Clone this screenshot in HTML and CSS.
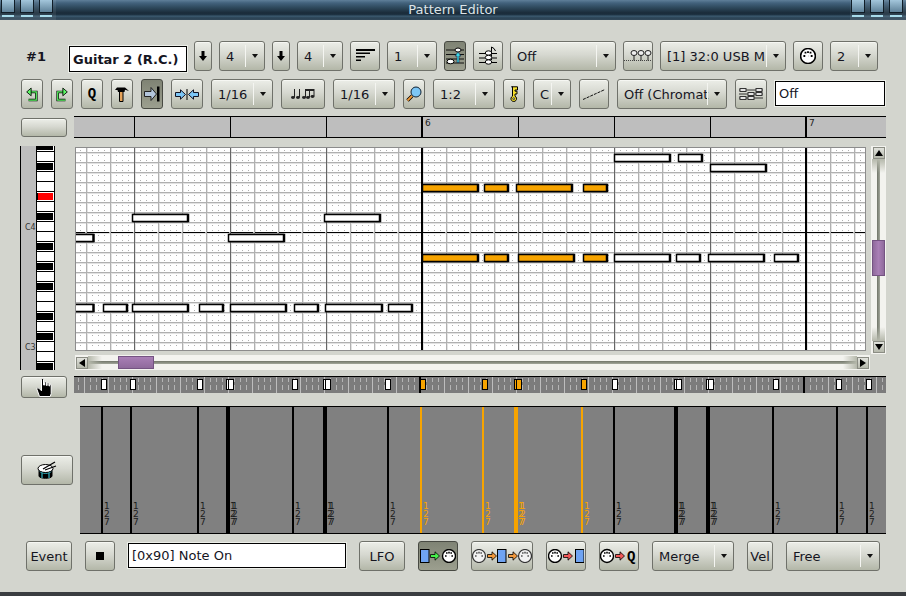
FILE: index.html
```html
<!DOCTYPE html>
<html lang="en">
<head>
  <meta charset="UTF-8">
  <title>Pattern Editor</title>
  <link rel="stylesheet" href="styles.css">
</head>
<body>
  <!-- shared icon parts -->
  <svg class="defs" aria-hidden="true">
    <defs>
      <g id="din">
        <circle cx="7" cy="7" r="6.5" fill="#fff" stroke="#000" stroke-width="1.4"/>
        <path d="M3 7h1.6M4 4h1.6M7 2.8v1.6M10 4H8.4M11 7H9.4M7 7h.1" stroke="#000" stroke-width="1.6" fill="none"/>
      </g>
      <g id="din-dim">
        <circle cx="7" cy="7" r="6.5" fill="#f2f2f2" stroke="#333" stroke-width="1.2"/>
        <path d="M3 7h1.6M4 4h1.6M7 2.8v1.6M10 4H8.4M11 7H9.4" stroke="#555" stroke-width="1.6" fill="none"/>
      </g>
      <rect id="blk" x=".5" y=".5" width="8.5" height="13" fill="#6fa3f2" stroke="#000"/>
      <path id="arr" d="M.5 3.500h4.500V.8L9.500 5 5 9.200V6.500H.5z" stroke="#000" stroke-width=".8"/>
    </defs>
  </svg>

  <header class="titlebar">
    <div class="wm"><i></i><i></i><i></i></div>
    <div class="title">Pattern Editor</div>
    <div class="wm"><i></i><i></i><i></i></div>
  </header>

  <div class="row row1">
    <div class="seq">#1</div>
    <div class="field name">Guitar 2 (R.C.)</div>
    <button class="btn w18"><svg width="10" height="12" viewBox="0 0 10 12"><path d="M3.500 1h3v5H9L5 11 1 6h2.500z"/></svg></button>
    <div class="combo w46"><span>4</span></div>
    <button class="btn w18"><svg width="10" height="12" viewBox="0 0 10 12"><path d="M3.500 1h3v5H9L5 11 1 6h2.500z"/></svg></button>
    <div class="combo w46"><span>4</span></div>
    <button class="btn w30"><svg width="20" height="14" viewBox="0 0 20 14"><path d="M1 0h19v2H1zM1 3.500h14v1.500H1zM1 7h9v1.500H1zM1 10.500h5V12H1z"/></svg></button>
    <div class="combo w50"><span>1</span></div>
    <button class="btn w22 on"><svg width="18" height="18" viewBox="0 0 18 18"><path d="M0 3h18M0 7.500h18M0 12h18M0 16h18" stroke="#111" fill="none"/><ellipse cx="12" cy="3" rx="3" ry="2" fill="#fff" stroke="#000"/><ellipse cx="4.500" cy="14.500" rx="3.500" ry="2.300" fill="#fff" stroke="#000"/><path d="M11 15.500V9H9l3-4 3 4h-2v6.500z" fill="#3fd8e8" stroke="#124" stroke-width=".6"/></svg></button>
    <button class="btn w30"><svg width="18" height="20" viewBox="0 0 18 20"><path d="M0 7.500h18M0 12h18M0 16.500h18" stroke="#000" fill="none"/><path d="M12.500 1v13M12.500 1q3 1 4 4" stroke="#000" fill="none"/><ellipse cx="9.500" cy="7" rx="3.200" ry="2.200" fill="#fff" stroke="#000"/><ellipse cx="9.500" cy="11.500" rx="3.200" ry="2.200" fill="#fff" stroke="#000"/><ellipse cx="9.500" cy="16" rx="3.200" ry="2.200" fill="#fff" stroke="#000"/></svg></button>
    <div class="combo w106"><span>Off</span></div>
    <button class="btn w30"><svg width="28" height="14" viewBox="0 0 28 14"><path d="M0 11.500h28" stroke="#444" stroke-dasharray="1 1" fill="none"/><g fill="#eee" stroke="#222"><ellipse cx="10" cy="4" rx="3" ry="2.500"/><ellipse cx="17" cy="4" rx="3" ry="2.500"/><ellipse cx="24" cy="4" rx="3" ry="2.500"/></g><path d="M10 6.500v5M17 6.500v5M24 6.500v5" stroke="#222" fill="none"/></svg></button>
    <div class="combo w126"><span>[1] 32:0 USB M</span></div>
    <button class="btn w30"><svg width="16" height="16" viewBox="0 0 14 14"><use href="#din"/></svg></button>
    <div class="combo w48"><span>2</span></div>
  </div>

  <div class="row row2">
    <button class="btn w22"><svg width="12" height="15" viewBox="0 0 14 17"><path d="M4 5.500H12V15H3" fill="none" stroke="#000" stroke-width="3"/><path d="M4 5.500H12V15H3" fill="none" stroke="#5dfa66" stroke-width="1.400"/><path d="M.8 5.500 6 1v9z" fill="#5dfa66" stroke="#000"/></svg></button>
    <button class="btn w22"><svg width="12" height="15" viewBox="0 0 14 17"><path d="M10 5.500H2V15H11" fill="none" stroke="#000" stroke-width="3"/><path d="M10 5.500H2V15H11" fill="none" stroke="#5dfa66" stroke-width="1.400"/><path d="M13.200 5.500 8 1v9z" fill="#5dfa66" stroke="#000"/></svg></button>
    <button class="btn w22 q">Q</button>
    <button class="btn w22"><svg width="14" height="15" viewBox="0 0 14 15"><path d="M4.500 4.500h3.500V14.500H4.500z" fill="#e6a35a" stroke="#000"/><path d="M0 3 2 .5h8L14 4 10 2.800 9.500 5H3L2.500 3z"/></svg></button>
    <button class="btn w22 on"><svg width="16" height="16" viewBox="0 0 16 16"><path d="M.5 5.500h6.500V1.500L12.500 8 7 14.500v-4H.5z" fill="#b4c6dc" stroke="#222"/><path d="M13 .5h2.500v15H13z"/></svg></button>
    <button class="btn w32"><svg width="24" height="11" viewBox="0 0 24 11"><path d="M.5 3.500h5V.8L10.500 5.500l-5 4.700V7.500h-5z" fill="#7cc6f6" stroke="#112"/><path d="M12 0v11" stroke="#000" fill="none"/><path d="M23.500 3.500h-5V.8L13.500 5.500l5 4.700V7.500h5z" fill="#7cc6f6" stroke="#112"/></svg></button>
    <div class="combo w62"><span>1/16</span></div>
    <button class="btn w44"><svg width="24" height="10" viewBox="0 0 24 10"><g fill="none" stroke="#222"><path d="M3.500 0v8M8.500 0v8M14.500 0v8M18.500 0v8M23 0v7"/><path d="M14.500 1h4M19 1h4" stroke-width="2"/></g><g fill="#222"><ellipse cx="2" cy="8.500" rx="2" ry="1.400"/><ellipse cx="7" cy="8.500" rx="2" ry="1.400"/><ellipse cx="13" cy="8.500" rx="2" ry="1.400"/><ellipse cx="17" cy="8.500" rx="2" ry="1.400"/><ellipse cx="21.500" cy="7.500" rx="2" ry="1.400"/></g></svg></button>
    <div class="combo w62"><span>1/16</span></div>
    <button class="btn w22"><svg width="16" height="16" viewBox="0 0 16 16"><path d="M6 10 1.500 14.500" stroke="#000" stroke-width="3.400" fill="none"/><path d="M6 10 1.500 14.500" stroke="#f29a38" stroke-width="1.800" fill="none"/><circle cx="10" cy="6" r="5" fill="#7cc6f6" stroke="#123"/></svg></button>
    <div class="combo w62"><span>1:2</span></div>
    <button class="btn w22"><svg width="9" height="16" viewBox="0 0 9 16"><path d="M1.500.8h6V4H5v1.200h2V8H5v2.200a2.800 2.800 0 1 1-2.500 0V.8z" fill="#f5e02c" stroke="#000"/><circle cx="3.700" cy="12.700" r="1" fill="#b9bcae" stroke="#000" stroke-width=".6"/></svg></button>
    <div class="combo w38"><span>C</span></div>
    <button class="btn w30"><svg width="22" height="11" viewBox="0 0 22 11"><path d="M0 10.500 22 .5" fill="none" stroke="#111" stroke-dasharray="3 1"/></svg></button>
    <div class="combo w110"><span>Off (Chromat</span></div>
    <button class="btn w32"><svg width="24" height="12" viewBox="0 0 24 12"><path d="M0 2h24M0 6h24M0 10h24" stroke="#333" fill="none"/><g fill="#e4e4e4" stroke="#333"><rect x="1" y=".5" width="6" height="3"/><rect x="9" y="4.500" width="6" height="3"/><rect x="17" y=".5" width="6" height="3"/><rect x="1" y="8.500" width="6" height="3"/><rect x="9" y="8.500" width="6" height="3"/><rect x="17" y="4.500" width="6" height="3"/></g></svg></button>
    <div class="field scale">Off</div>
  </div>

  <div class="row row3">
    <button class="btn grid-btn"></button>
    <svg class="ruler" width="812" height="22" viewBox="0 0 812 22" shape-rendering="crispEdges">
      <rect width="812" height="22" fill="#bebebe"/>
      <path d="M0 .5h812M0 21.500h812M60.500 0v22M156.500 0v22M252.500 0v22M444.500 0v22M540.500 0v22M636.500 0v22" stroke="#000" fill="none"/>
      <rect x="347" width="2" height="22"/>
      <rect x="731" width="2" height="22"/>
      <text class="bar-no" x="351" y="10">6</text>
      <text class="bar-no" x="735" y="10">7</text>
    </svg>
  </div>

  <div class="row editor">
    <svg class="piano" width="35" height="224" viewBox="0 0 35 224">
      <defs>
        <pattern id="keys" x="17" y="-5" width="18" height="120" patternUnits="userSpaceOnUse">
          <rect width="18" height="120" fill="#000"/>
          <g fill="#fff">
            <rect y="1" width="17" height="9"/><rect y="11" width="17" height="9"/><rect y="21" width="17" height="9"/><rect y="31" width="17" height="9"/><rect y="41" width="17" height="9"/><rect y="51" width="17" height="9"/><rect y="61" width="17" height="9"/><rect y="71" width="17" height="9"/><rect y="81" width="17" height="9"/><rect y="91" width="17" height="9"/><rect y="101" width="17" height="9"/><rect y="111" width="17" height="9"/>
          </g>
          <g fill="#000">
            <rect y="2" width="16" height="7"/><rect y="22" width="16" height="7"/><rect y="52" width="16" height="7"/><rect y="72" width="16" height="7"/><rect y="102" width="16" height="7"/>
          </g>
        </pattern>
      </defs>
      <rect width="1" height="224"/>
      <rect x="1" width="15" height="224" fill="#bebebe"/>
      <rect x="16" width="1" height="224"/>
      <rect x="17" width="18" height="224" fill="url(#keys)"/>
      <rect x="34" width="1" height="224"/>
      <rect x="18" y="47" width="15" height="7" fill="#f00"/>
      <text class="oct" x="5" y="84">C4</text>
      <text class="oct" x="5" y="204">C3</text>
    </svg>

    <div class="roll-wrap">
      <div class="roll-top">
        <svg class="roll" width="791" height="204" viewBox="0 0 791 204">
          <defs>
            <pattern id="cells" x="11" y="5" width="24" height="10" patternUnits="userSpaceOnUse">
              <rect width="24" height="10" fill="#fff"/>
              <path d="M1.500 0v10M0 1.500h24" stroke="#e2e2e2" shape-rendering="crispEdges"/>
              <path d="M.5 0v10M0 .5h24" stroke="#b0b0b0" shape-rendering="crispEdges"/>
              <path d="M6 3h1v1H6zM12 3h1v1h-1zM18 3h1v1h-1zM6 8h1v1H6zM12 8h1v1h-1zM18 8h1v1h-1z" fill="#b0b0b0"/>
            </pattern>
          </defs>
          <rect width="791" height="204" fill="url(#cells)"/>
          <path d="M59.500 0v204M155.500 0v204M251.500 0v204M443.500 0v204M539.500 0v204M635.500 0v204" stroke="#666" fill="none" shape-rendering="crispEdges"/>
          <rect x="346" width="2" height="204"/>
          <rect x="730" width="2" height="204"/>
          <path d="M0 85.500h791" stroke="#000" stroke-dasharray="22 2" stroke-dashoffset="12" fill="none" shape-rendering="crispEdges"/>
          <g class="notes">
            <rect x="539.500" y="7.500" width="55" height="7"/><rect x="603.500" y="7.500" width="23" height="7"/>
            <rect x="635.500" y="17.500" width="55" height="7"/>
            <rect class="sel" x="347.500" y="37.500" width="55" height="7"/><rect class="sel" x="409.500" y="37.500" width="23" height="7"/><rect class="sel" x="441.500" y="37.500" width="55" height="7"/><rect class="sel" x="508.500" y="37.500" width="23" height="7"/>
            <rect x="57.500" y="67.500" width="55" height="7"/><rect x="249.500" y="67.500" width="55" height="7"/>
            <rect x="-20" y="87.500" width="38" height="7"/><rect x="153.500" y="87.500" width="55" height="7"/>
            <rect class="sel" x="347.500" y="107.500" width="55" height="7"/><rect class="sel" x="409.500" y="107.500" width="23" height="7"/><rect class="sel" x="443.500" y="107.500" width="55" height="7"/><rect class="sel" x="508.500" y="107.500" width="23" height="7"/>
            <rect x="539.500" y="107.500" width="55" height="7"/><rect x="601.500" y="107.500" width="23" height="7"/><rect x="633.500" y="107.500" width="55" height="7"/><rect x="699.500" y="107.500" width="23" height="7"/>
            <rect x="-20" y="157.500" width="38" height="7"/><rect x="28.500" y="157.500" width="23" height="7"/><rect x="57.500" y="157.500" width="55" height="7"/><rect x="124.500" y="157.500" width="23" height="7"/><rect x="155.500" y="157.500" width="55" height="7"/><rect x="219.500" y="157.500" width="23" height="7"/><rect x="250.500" y="157.500" width="56" height="7"/><rect x="313.500" y="157.500" width="23" height="7"/>
          </g>
          <rect x=".5" y=".5" width="790" height="203" fill="none" stroke="#8c8c8c"/>
        </svg>
        <div class="vscroll">
          <div class="sb-btn"><svg width="8" height="6" viewBox="0 0 8 6"><path d="M4 0l4 6H0z"/></svg></div>
          <div class="vtrack"><div class="vthumb"></div></div>
          <div class="sb-btn"><svg width="8" height="6" viewBox="0 0 8 6"><path d="M4 6l4-6H0z"/></svg></div>
        </div>
      </div>
      <div class="hscroll">
        <div class="sb-btn"><svg width="6" height="8" viewBox="0 0 6 8"><path d="M0 4l6 4V0z"/></svg></div>
        <div class="htrack"><div class="hthumb"></div></div>
        <div class="sb-btn"><svg width="6" height="8" viewBox="0 0 6 8"><path d="M6 4L0 8V0z"/></svg></div>
      </div>
    </div>
  </div>

  <div class="row strip-row">
    <button class="btn hand-btn"><svg width="17" height="19" viewBox="0 0 17 19"><path d="M5.500 1.500c0-1.300 2-1.300 2 0V7l1 .1V4.500c0-1 1.700-1 1.700 0V7.300l1 .2V5.500c0-1 1.700-1 1.700 0v2.300l.8.200V7c0-1 1.500-1 1.500 0v8.500l-1 3H3.500L1 11.500c-.6-1.400 1-2.200 2-1.200l2.500 2.500z" stroke="#fff"/></svg></button>
    <svg class="strip" width="812" height="17" viewBox="0 0 812 17" shape-rendering="crispEdges">
      <defs>
        <pattern id="ticks" x="10" width="24" height="17" patternUnits="userSpaceOnUse">
          <rect width="24" height="17" fill="#7c7c7c"/>
          <path d="M.5 0v17" stroke="#bdbdbd"/>
          <path d="M6.500 2v4M12.500 2v4M18.500 2v4M6.500 9v5M12.500 9v5M18.500 9v5" stroke="#b4b4b4"/>
        </pattern>
      </defs>
      <rect width="812" height="17" fill="url(#ticks)"/>
      <rect width="812" height="1"/>
      <rect x="345" width="2" height="17"/>
      <rect x="729" width="2" height="17"/>
      <g class="marks">
        <rect x="27.500" y="3.500" width="5" height="10"/><rect x="56.500" y="3.500" width="5" height="10"/><rect x="123.500" y="3.500" width="5" height="10"/><rect x="152.500" y="3.500" width="5" height="10"/><rect x="154.500" y="3.500" width="5" height="10"/><rect x="218.500" y="3.500" width="5" height="10"/><rect x="249.500" y="3.500" width="5" height="10"/><rect x="251.500" y="3.500" width="5" height="10"/><rect x="311.500" y="3.500" width="5" height="10"/>
        <rect class="sel" x="346.500" y="3.500" width="5" height="10"/><rect class="sel" x="408.500" y="3.500" width="5" height="10"/><rect class="sel" x="440.500" y="3.500" width="5" height="10"/><rect class="sel" x="442.500" y="3.500" width="5" height="10"/><rect class="sel" x="507.500" y="3.500" width="5" height="10"/>
        <rect x="538.500" y="3.500" width="5" height="10"/><rect x="600.500" y="3.500" width="5" height="10"/><rect x="602.500" y="3.500" width="5" height="10"/><rect x="632.500" y="3.500" width="5" height="10"/><rect x="634.500" y="3.500" width="5" height="10"/><rect x="699.500" y="3.500" width="5" height="10"/><rect x="762.500" y="3.500" width="5" height="10"/><rect x="792.500" y="3.500" width="5" height="10"/>
      </g>
    </svg>
  </div>

  <div class="row vel-row">
    <button class="btn drum-btn"><svg width="20" height="20" viewBox="0 0 20 20"><path d="M2 9v7c0 3 13 3 13 0V9z" stroke="#000"/><path d="M5 12v6M12 12v6M2.500 11c2 3 10 3 12 0" stroke="#3fd8e8" fill="none"/><ellipse cx="8.500" cy="8.500" rx="7.500" ry="4" fill="#fff" stroke="#000"/><path d="M6 9l12-7M8 10l11-4" stroke="#000" stroke-width="1.300" fill="none"/></svg></button>
    <div class="vel">
      <div class="ev" style="left:21px"><span>127</span></div>
      <div class="ev" style="left:50px"><span>127</span></div>
      <div class="ev" style="left:117px"><span>127</span></div>
      <div class="ev wide" style="left:146px"><span>127</span></div>
      <div class="ev" style="left:212px"><span>127</span></div>
      <div class="ev wide" style="left:243px"><span>127</span></div>
      <div class="ev" style="left:307px"><span>127</span></div>
      <div class="ev sel" style="left:340px"><span>127</span></div>
      <div class="ev sel" style="left:402px"><span>127</span></div>
      <div class="ev sel wide" style="left:434px"><span>127</span></div>
      <div class="ev sel" style="left:501px"><span>127</span></div>
      <div class="ev" style="left:533px"><span>127</span></div>
      <div class="ev wide" style="left:594px"><span>127</span></div>
      <div class="ev wide" style="left:626px"><span>127</span></div>
      <div class="ev" style="left:692px"><span>127</span></div>
      <div class="ev" style="left:756px"><span>127</span></div>
      <div class="ev" style="left:786px"><span>127</span></div>
    </div>
  </div>

  <div class="row bottom">
    <button class="btn w46 txt">Event</button>
    <button class="btn w30"><svg width="8" height="8" viewBox="0 0 8 8"><path d="M0 0h8v8H0z"/></svg></button>
    <div class="field status">[0x90] Note On</div>
    <button class="btn w46 txt">LFO</button>
    <button class="btn w40 on"><svg width="36" height="14" viewBox="0 0 36 14"><use href="#blk"/><use href="#arr" x="10" y="2" fill="#46f04a"/><use href="#din" x="22"/></svg></button>
    <button class="btn w62"><svg width="60" height="14" viewBox="0 0 60 14"><use href="#din-dim"/><use href="#arr" x="15" y="2" fill="#f0983c"/><use href="#blk" x="25"/><use href="#arr" x="36" y="2" fill="#f0983c"/><use href="#din-dim" x="46"/></svg></button>
    <button class="btn w40"><svg width="36" height="14" viewBox="0 0 36 14"><use href="#din"/><use href="#arr" x="15" y="2" fill="#f25858"/><use href="#blk" x="27"/></svg></button>
    <button class="btn w40"><svg width="38" height="16" viewBox="0 0 38 16"><use href="#din" y="1"/><use href="#arr" x="15" y="3" fill="#f25858"/><text class="q-ico" x="27" y="13">Q</text></svg></button>
    <div class="combo w82"><span>Merge</span></div>
    <button class="btn w26 txt">Vel</button>
    <div class="combo w94"><span>Free</span></div>
  </div>

  <footer class="foot"></footer>
</body>
</html>
```

FILE: styles.css
```css
* {
  box-sizing: border-box;
}

html, body {
  height: 100%;
}

body {
  margin: 0;
  height: 596px;
  overflow: hidden;
  display: flex;
  flex-direction: column;
  background-color: #d3d5ce;
  font-family: "DejaVu Sans", sans-serif;
  font-size: 13px;
  color: #15151f;
}

svg {
  display: block;
  flex: none;
}

.defs {
  width: 0;
  height: 0;
  position: absolute;
}

/* window title */
.titlebar {
  flex: none;
  height: 20px;
  display: flex;
  justify-content: space-between;
  background: linear-gradient(#5f7f99 0, #42627c 3px, #2c4659 8px, #1a2b39 13px, #1f3444 15px, #3d5c72 16px, #2b4355 18px, #33495a 20px);
}

.title {
  color: #dde4e8;
  line-height: 20px;
  font-size: 13px;
}

.wm {
  width: 56px;
  display: flex;
  gap: 5px;
  padding: 0 1px;
  background-color: rgba(255, 255, 255, 0.08);
}

.wm i {
  position: relative;
  width: 14px;
  height: 13px;
  border: 1px solid #101d27;
  border-top: 0;
  background: linear-gradient(#a3c6db, #5f8299);
}

.wm i::after {
  content: "";
  position: absolute;
  left: 0;
  right: 0;
  top: 15px;
  height: 2px;
  background-color: #a8dcec;
}

/* rows */
.row {
  flex: none;
  display: flex;
}

.row1 {
  margin-top: 21px;
  height: 30px;
  padding-left: 26px;
  gap: 7px;
}

.row2 {
  margin-top: 8px;
  height: 30px;
  padding-left: 21px;
  gap: 8px;
}

.row3 {
  margin-top: 7px;
  height: 22px;
  padding-left: 21px;
  gap: 7px;
}

.editor {
  margin-top: 8px;
  height: 224px;
  padding-left: 20px;
  gap: 20px;
}

.strip-row {
  margin-top: 6px;
  height: 23px;
  padding-left: 21px;
  gap: 7px;
}

.vel-row {
  margin-top: 7px;
  height: 128px;
  padding-left: 21px;
  gap: 7px;
  align-items: center;
}

.bottom {
  margin-top: 7px;
  height: 30px;
  padding-left: 26px;
  gap: 13px;
}

.foot {
  margin-top: auto;
  height: 4px;
  background-color: #3a3d40;
}

/* widgets */
.btn {
  display: flex;
  align-items: center;
  justify-content: center;
  flex: none;
  padding: 0;
  height: 30px;
  border: 1px solid #6f716a;
  border-radius: 3px;
  background: linear-gradient(#eceee8, #d6d8d0 45%, #b3b7a8);
  box-shadow: inset 0 1px 0 #f6f7f3;
  font: inherit;
  color: inherit;
}

.btn.on {
  border-color: #484a43;
  background: linear-gradient(#7f8374, #9c9f8f);
  box-shadow: none;
}

.q {
  font-family: "Liberation Mono", monospace;
  font-weight: bold;
  font-size: 14px;
  color: #000;
}

.q-ico {
  font-family: "Liberation Mono", monospace;
  font-weight: bold;
  font-size: 14px;
  fill: #000;
}

.w18 { width: 18px; }
.w22 { width: 22px; }
.w26 { width: 26px; }
.w30 { width: 30px; }
.w32 { width: 32px; }
.w38 { width: 38px; }
.w40 { width: 40px; }
.w44 { width: 44px; }
.w46 { width: 46px; }
.w48 { width: 48px; }
.w50 { width: 50px; }
.w62 { width: 62px; }
.w82 { width: 82px; }
.w94 { width: 94px; }
.w106 { width: 106px; }
.w110 { width: 110px; }
.w126 { width: 126px; }

.combo {
  position: relative;
  flex: none;
  height: 30px;
  padding-left: 6px;
  padding-right: 18px;
  border: 1px solid #6f716a;
  border-radius: 3px;
  background: linear-gradient(#eceee8, #d6d8d0 45%, #b3b7a8);
  box-shadow: inset 0 1px 0 #f6f7f3;
  line-height: 29px;
  white-space: nowrap;
}

.combo::before {
  content: "";
  position: absolute;
  top: 3px;
  bottom: 3px;
  right: 18px;
  width: 1px;
  background-color: #f4f5f1;
}

.combo::after {
  content: "";
  position: absolute;
  right: 6px;
  top: 12px;
  border: 3px solid transparent;
  border-top: 4px solid #111;
  border-bottom: 0;
}

.field {
  flex: none;
  background-color: #fff;
  border: 1px solid #000;
  box-shadow: 0 0 0 1px #eceee8;
  padding-left: 3px;
  white-space: nowrap;
}

.seq {
  width: 36px;
  line-height: 31px;
  font-weight: bold;
  font-size: 13px;
}

.name {
  width: 118px;
  height: 26px;
  margin-top: 5px;
  font-weight: bold;
  font-size: 13px;
  line-height: 25px;
}

.scale {
  width: 110px;
  height: 25px;
  margin-top: 2px;
  line-height: 23px;
}

.status {
  width: 218px;
  height: 25px;
  margin-top: 2px;
  line-height: 24px;
}

.txt {
  font-size: 13px;
}

.grid-btn {
  width: 46px;
  height: 19px;
  margin-top: 2px;
}

.hand-btn {
  width: 46px;
  height: 22px;
}

.drum-btn {
  width: 52px;
}

/* timeline and roll */
.bar-no {
  font-size: 9px;
  fill: #222;
}

.oct {
  font-size: 8px;
  fill: #333;
}

.roll-wrap {
  width: 811px;
}

.roll-top {
  display: flex;
  height: 206px;
  margin-top: 1px;
  gap: 6px;
}

.notes {
  fill: #fff;
  stroke: #000;
  stroke-width: 1.500;
  filter: drop-shadow(1px 0 0 #000);
}

.notes .sel {
  fill: #f7a400;
}

.marks {
  fill: #fff;
  stroke: #000;
}

.marks .sel {
  fill: #f7a400;
}

/* scrollbars */
.sb-btn {
  flex: none;
  display: flex;
  align-items: center;
  justify-content: center;
  width: 12px;
  height: 12px;
  background: linear-gradient(#e2e3dd, #b5b8ab);
  border: 1px solid #8b8d84;
}

.vscroll {
  width: 13px;
  display: flex;
  flex-direction: column;
  align-items: center;
  background-color: #f3f3ef;
  box-shadow: 0 0 0 1px #f3f3ef;
}

.vtrack {
  flex: 1;
  width: 100%;
  padding-top: 81px;
  background:
    linear-gradient(#b5b8ab, transparent 14px, transparent calc(100% - 14px), #b5b8ab),
    linear-gradient(90deg, #f3f3ef 5px, #6f7468 5px, #a3a79b 8px, #f3f3ef 8px);
}

.vthumb {
  height: 36px;
  background: linear-gradient(90deg, #8f6a9c, #a97fb6 50%, #8f6a9c);
  border: 1px solid #745382;
}

.hscroll {
  display: flex;
  align-items: center;
  width: 795px;
  height: 15px;
  margin-top: 2px;
  padding: 0 1px;
  background-color: #f3f3ef;
}

.htrack {
  flex: 1;
  height: 13px;
  padding-left: 30px;
  background:
    linear-gradient(90deg, #b5b8ab, transparent 14px, transparent calc(100% - 14px), #b5b8ab),
    linear-gradient(#f3f3ef 5px, #6f7468 5px, #a3a79b 8px, #f3f3ef 8px);
}

.hthumb {
  width: 36px;
  height: 13px;
  background: linear-gradient(#a97fb6, #8f6a9c);
  border: 1px solid #745382;
}

/* velocity lane */
.vel {
  position: relative;
  flex: none;
  width: 806px;
  height: 128px;
  overflow: hidden;
  background-color: #808080;
  border-top: 1px solid #000;
  border-bottom: 1px solid #000;
}

.ev {
  position: absolute;
  top: 0;
  bottom: 0;
  width: 2px;
  background-color: #000;
  color: #1c1c1c;
}

.ev.wide {
  width: 4px;
}

.ev.sel {
  background-color: #f7a400;
  color: #f7a400;
}

.ev span {
  position: absolute;
  left: 3px;
  top: 95px;
  width: 6px;
  font-size: 9px;
  line-height: 8px;
  word-break: break-all;
}

.ev.wide span {
  left: 4px;
  text-shadow: 2px 0 0 currentColor;
}
```
